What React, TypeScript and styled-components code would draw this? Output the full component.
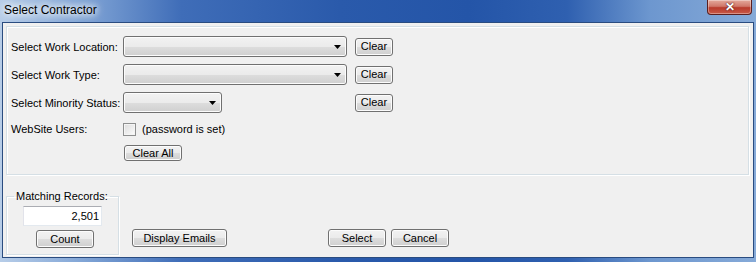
import React from 'react';
import styled, { createGlobalStyle } from 'styled-components';

const GlobalStyle = createGlobalStyle`
  html, body {
    margin: 0;
    padding: 0;
    background: #ffffff;
  }
  body {
    font-family: "Liberation Sans", Arial, sans-serif;
    font-size: 11px;
    color: #000;
  }
`;

const Window = styled.div`
  width: 756px;
  height: 262px;
  box-sizing: border-box;
  display: flex;
  flex-direction: column;
  padding: 0 2px 4px 2px;
  background: linear-gradient(90deg, #b7cde8 0%, #86a9d8 10%, #3f6db8 24%, #2a5aab 45%, #2455a8 62%, #2f60b0 75%, #6d97cf 86%, #86aad8 100%);
`;

const TitleBar = styled.div`
  height: 22px;
  flex: none;
  display: flex;
  align-items: flex-start;
  justify-content: space-between;
`;

const Title = styled.span`
  font-family: "Liberation Sans", Arial, sans-serif;
  font-size: 12px;
  line-height: 20px;
  padding-left: 2px;
  color: #000;
  text-shadow: 0 0 6px #fff, 0 0 8px #fff, 0 0 10px #e8f0fa;
`;

const CloseButton = styled.div`
  width: 45px;
  height: 15px;
  margin-right: 2px;
  box-sizing: border-box;
  display: flex;
  align-items: center;
  justify-content: center;
  border: 1px solid #5b1f1f;
  border-top: none;
  border-radius: 0 0 4px 4px;
  background: linear-gradient(180deg, #e4a99c 0%, #d0776a 45%, #b93a2c 55%, #c85a48 100%);
  box-shadow: inset 0 0 0 1px rgba(255, 255, 255, 0.35);
  color: #fff;
  font-weight: bold;
  font-size: 12px;
  line-height: 12px;
  text-shadow: 0 0 2px #5b1f1f, 0 0 1px #5b1f1f;
`;

const Client = styled.div`
  flex: 1;
  display: flex;
  flex-direction: column;
  background: #f0f0f0;
  border: 1px solid #2a4c80;
  padding: 3px 4px 0 3px;
  min-height: 0;
`;

const Panel = styled.div`
  height: 149px;
  box-sizing: border-box;
  flex: none;
  border: 1px solid #d5dfe5;
  box-shadow: inset 1px 1px 0 #fff, 1px 1px 0 #fff;
  padding: 9px 0 0 4px;
  display: grid;
  grid-template-columns: 112px 232px 38px;
  grid-template-rows: 21px 21px 21px 18px 16px;
  row-gap: 7px;
  align-items: center;
`;

const Label = styled.span`
  white-space: nowrap;
`;

const Combo = styled.div<{ $width: number }>`
  width: ${p => p.$width}px;
  height: 21px;
  box-sizing: border-box;
  border: 1px solid #707070;
  border-radius: 3px;
  background: linear-gradient(180deg, #f2f2f2 0%, #ebebeb 50%, #dddddd 51%, #cfcfcf 100%);
  box-shadow: inset 0 0 0 1px #fcfcfc;
  display: flex;
  align-items: center;
  justify-content: flex-end;
  padding-right: 5px;
`;

const Button = styled.button<{ $width: number; $height?: number }>`
  width: ${p => p.$width}px;
  height: ${p => p.$height ?? 18}px;
  box-sizing: border-box;
  padding: 0;
  margin: 0;
  font-family: "Liberation Sans", Arial, sans-serif;
  font-size: 11px;
  color: #000;
  border: 1px solid #707070;
  border-radius: 3px;
  background: linear-gradient(180deg, #f2f2f2 0%, #ebebeb 50%, #dddddd 51%, #cfcfcf 100%);
  box-shadow: inset 0 0 0 1px #fcfcfc;
  line-height: 1;
`;

const CheckRow = styled.div`
  display: flex;
  align-items: center;
  gap: 6px;
  grid-column: 2 / 4;
`;

const CheckBox = styled.span`
  width: 13px;
  height: 13px;
  box-sizing: border-box;
  border: 1px solid #8e8f8f;
  background: linear-gradient(135deg, #dcdcdc 0%, #f2f2f2 70%, #fff 100%);
  box-shadow: inset 0 0 0 1px #f4f4f4;
`;

const ClearAllCell = styled.div`
  grid-column: 2;
  padding-left: 1px;
`;

const ClearCell = styled.div`
  display: flex;
  align-items: center;
  height: 21px;
`;

const BottomBar = styled.div`
  flex: 1;
  display: flex;
  align-items: flex-end;
`;

const GroupBox = styled.fieldset`
  width: 113px;
  box-sizing: border-box;
  margin: 0 0 2px 0;
  padding: 0 0 6px 0;
  border: 1px solid #d5dfe5;
  box-shadow: inset 1px 1px 0 #fff, 1px 1px 0 #fff;
  display: flex;
  flex-direction: column;
`;

const Legend = styled.legend`
  margin-left: 7px;
  padding: 0 2px;
  font-size: 11px;
  line-height: 13px;
`;

const TextBox = styled.div`
  width: 79px;
  height: 20px;
  box-sizing: border-box;
  margin: 3px 0 4px 16px;
  background: #fff;
  border: 1px solid #abadb3;
  border-color: #abadb3 #e3e9ef #e3e9ef #e2e3ea;
  display: flex;
  align-items: center;
  justify-content: flex-end;
  padding-right: 2px;
  font-size: 11px;
`;

const CountWrap = styled.div`
  padding-left: 29px;
`;

const BarButton = styled.div<{ $gap: number }>`
  margin-left: ${p => p.$gap}px;
  margin-bottom: 10px;
`;

function Arrow() {
  return (
    <svg width="7" height="4" viewBox="0 0 7 4">
      <polygon points="0,0 7,0 3.5,4" fill="#000" />
    </svg>
  );
}

const rows = [
  { label: 'Select Work Location:', width: 224 },
  { label: 'Select Work Type:', width: 224 },
  { label: 'Select Minority Status:', width: 99 },
];

export default function App() {
  return (
    <>
      <GlobalStyle />
      <Window>
        <TitleBar>
          <Title>Select Contractor</Title>
          <CloseButton>✕</CloseButton>
        </TitleBar>
        <Client>
          <Panel>
            {rows.map(r => (
              <React.Fragment key={r.label}>
                <Label>{r.label}</Label>
                <Combo $width={r.width}>
                  <Arrow />
                </Combo>
                <ClearCell>
                  <Button $width={38}>Clear</Button>
                </ClearCell>
              </React.Fragment>
            ))}
            <Label>WebSite Users:</Label>
            <CheckRow>
              <CheckBox />
              <span>(password is set)</span>
            </CheckRow>
            <span />
            <ClearAllCell>
              <Button $width={58} $height={16}>Clear All</Button>
            </ClearAllCell>
          </Panel>
          <BottomBar>
            <GroupBox>
              <Legend>Matching Records:</Legend>
              <TextBox>2,501</TextBox>
              <CountWrap>
                <Button $width={58}>Count</Button>
              </CountWrap>
            </GroupBox>
            <BarButton $gap={13}>
              <Button $width={95}>Display Emails</Button>
            </BarButton>
            <BarButton $gap={101}>
              <Button $width={58}>Select</Button>
            </BarButton>
            <BarButton $gap={5}>
              <Button $width={58}>Cancel</Button>
            </BarButton>
          </BottomBar>
        </Client>
      </Window>
    </>
  );
}
